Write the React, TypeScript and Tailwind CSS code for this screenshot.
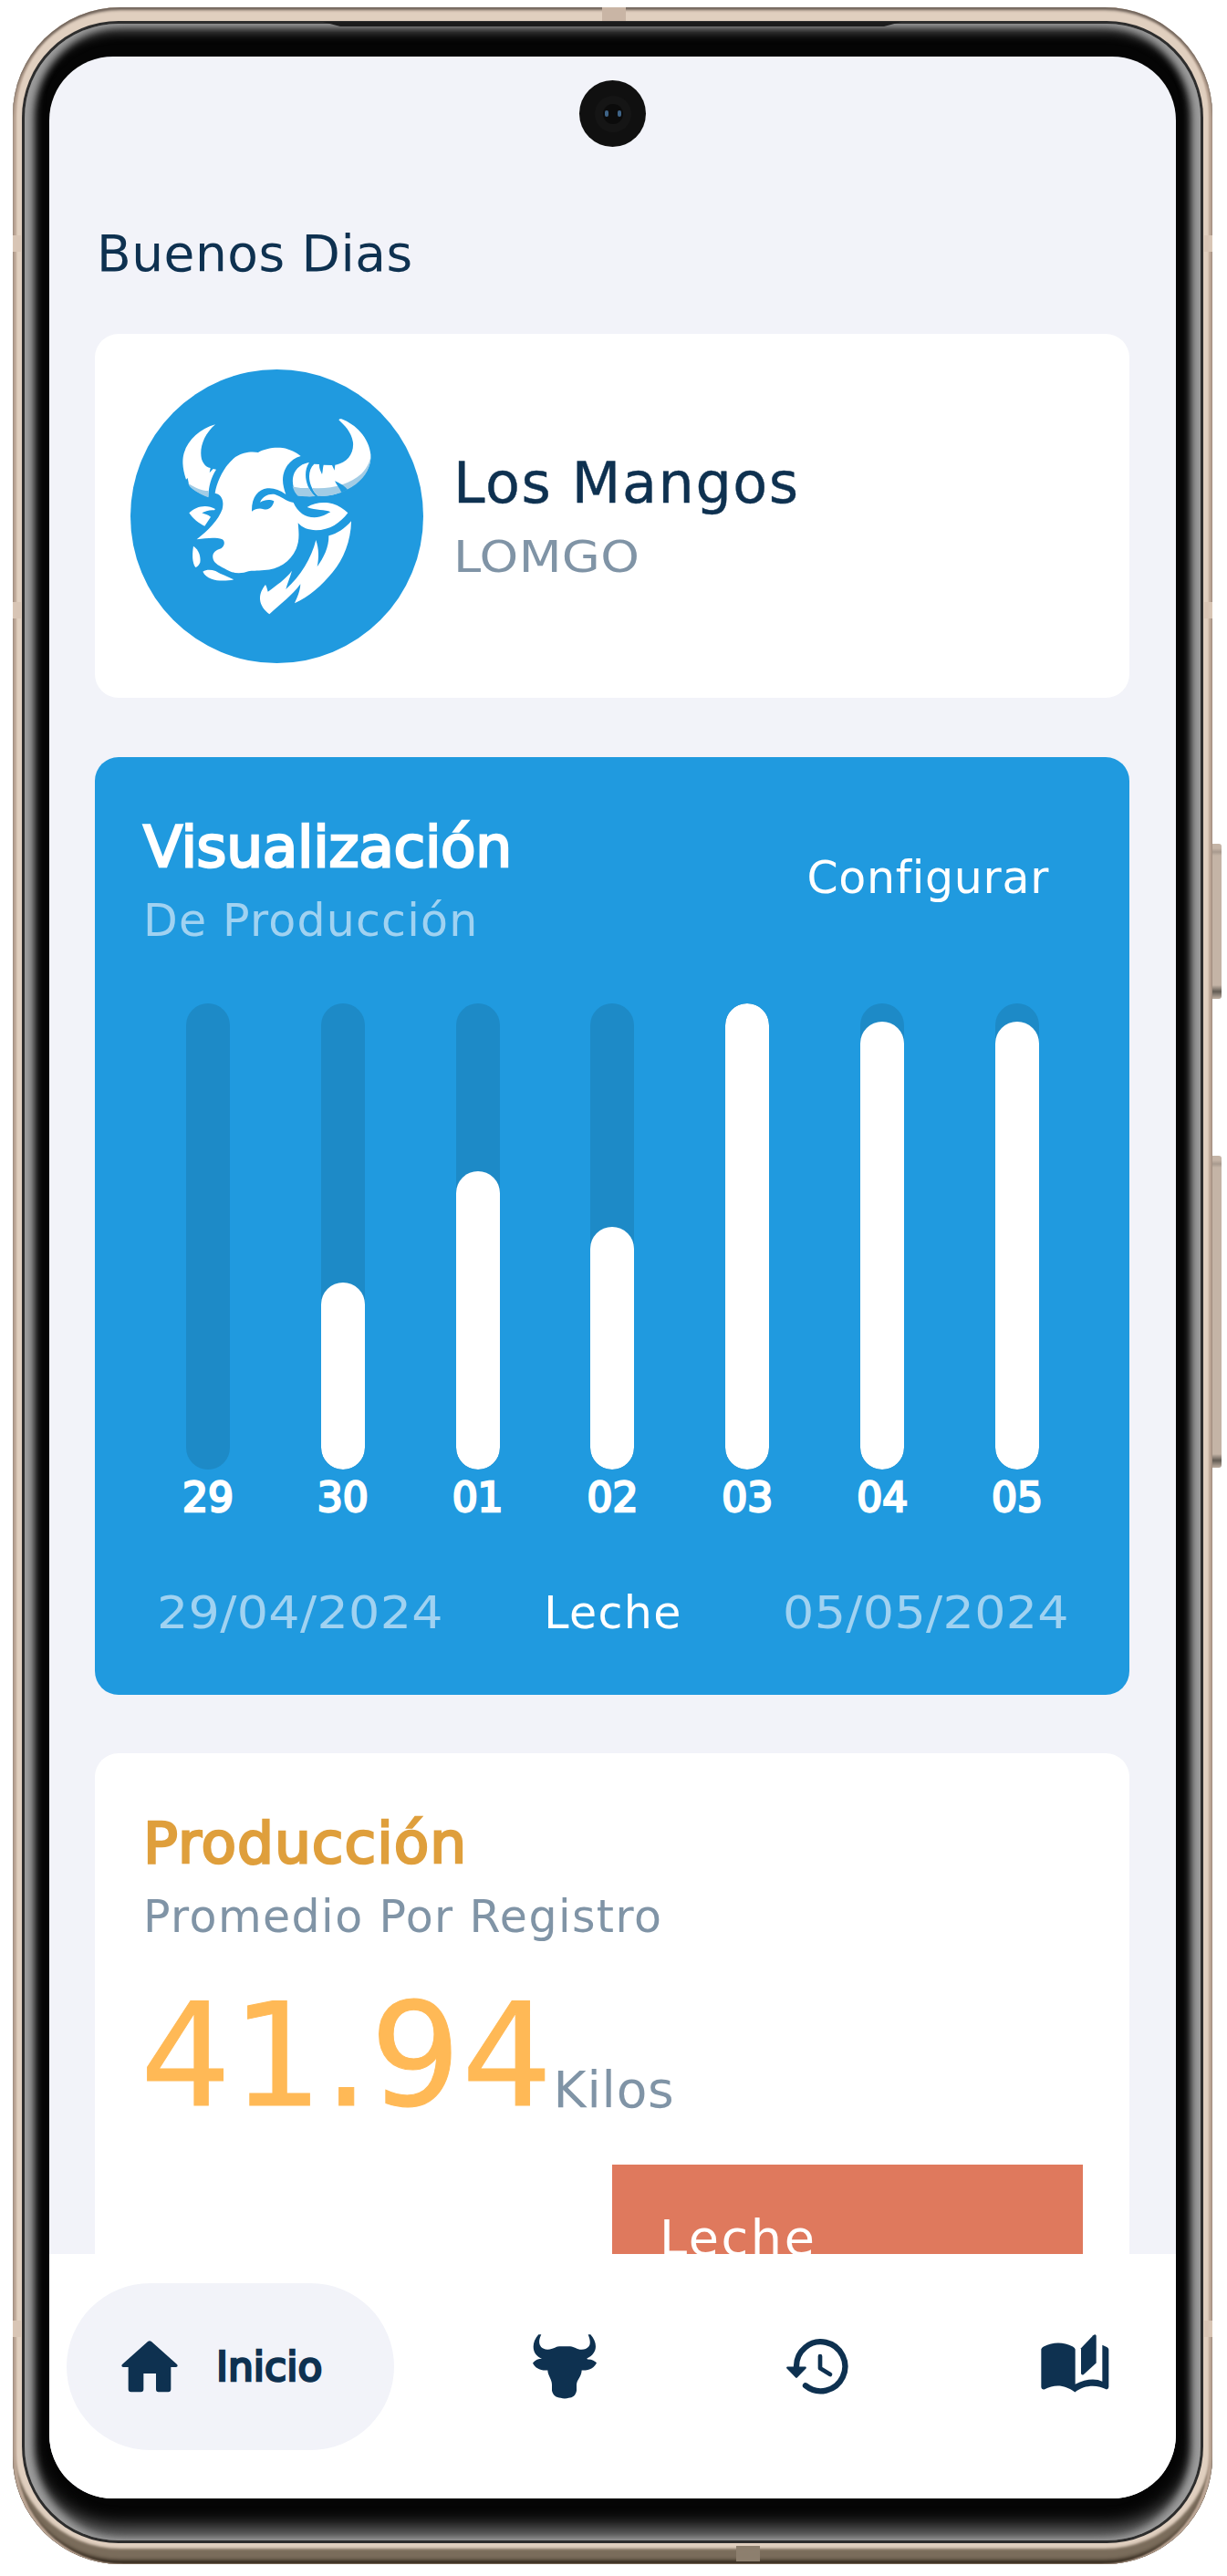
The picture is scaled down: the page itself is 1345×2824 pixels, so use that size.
import React from "react";

const days = [
  { label: "29", fill: 0 },
  { label: "30", fill: 205 },
  { label: "01", fill: 327 },
  { label: "02", fill: 266 },
  { label: "03", fill: 511 },
  { label: "04", fill: 491 },
  { label: "05", fill: 491 },
];

function BullAvatar() {
  return (
    <svg className="h-[322px] w-[321px] shrink-0" viewBox="130 135 963 966">
      <ellipse cx="611.5" cy="618" rx="481.5" ry="483" fill="#209adf" />
      <g fill="#fff">
        <path d="M409 316C370 350 356 395 364 430C370 447 380 458 393 459L390 475L402 462L412 464C395 490 387 520 386 554C360 544 325 525 322 512L318 492L313 497C300 460 300 430 306 410C320 365 360 330 409 316Z" />
        <path d="M408 542C415 500 440 450 475 423C500 406 530 404 550 408C570 396 600 390 630 393C655 397 675 408 690 420C655 430 632 460 631 498C631 515 636 532 641 546C620 530 600 524 580 526C550 530 528 555 529 602C540 594 555 590 568 595C590 600 600 580 602 568C590 562 572 562 556 572C565 552 585 543 605 546C625 552 640 568 666 573C680 605 705 622 735 622C760 621 775 610 788 604C770 594 740 600 711 588C735 572 770 570 795 577C815 583 832 595 845 607C820 640 785 664 740 664C715 663 695 656 681 640C685 680 685 700 675 725C655 770 615 792 570 795C545 798 530 796 518 799C500 806 475 808 455 798C435 787 410 778 403 762C396 745 405 730 428 724C440 716 442 700 432 694C410 686 380 690 348 694C385 665 420 630 432 595C440 560 425 545 408 542Z" />
        <path d="M323 607C345 585 380 577 409 594L406 598C390 596 375 602 365 607C375 612 385 612 394 620L374 650C355 642 335 625 323 607Z" />
        <path d="M337 716C355 728 362 750 359 770C354 780 349 785 344 786C332 770 333 740 337 716Z" />
        <path d="M368 800C380 792 395 793 410 798C430 810 450 816 470 826C440 832 385 835 368 800Z" />
        <path d="M718 441C700 465 700 515 736 552C715 553 695 552 680 550C650 510 660 450 718 441Z" />
        <path d="M734 446L751 447C750 460 755 470 760 480C763 470 762 460 765 449L793 450L801 467L803 449C845 443 865 410 862 375C856 340 835 320 815 301C816 298 820 297 824 298C870 315 915 360 920 415C922 460 895 500 840 530C810 546 780 552 745 550C715 520 708 470 734 446Z" />
        <path d="M856 634C855 700 830 760 795 802C760 845 715 885 670 904C678 885 688 865 689 841C660 880 625 905 587 940C560 920 540 885 574 843C578 850 580 858 582 866C610 845 640 825 661 797C655 820 645 840 641 858C690 815 725 755 740 696C750 725 750 755 744 784C765 755 783 720 782 682C810 675 835 658 856 634Z" />
      </g>
      <g fill="#a2cce5">
        <path d="M320 509C340 523 365 534 386 534L386 556C355 543 323 526 320 509Z" />
        <path d="M663 520C682 526 700 526 717 524C722 535 728 544 738 552C715 554 695 553 680 550C672 543 667 532 663 520Z" />
        <path d="M728 525C790 529 850 515 890 478C905 463 918 440 920 420C922 460 895 505 842 530C810 548 780 552 746 551C738 544 732 535 728 525Z" />
      </g>
      <path d="M802 502C815 508 830 514 844 530L824 540C818 525 808 516 802 502Z" fill="#209adf" />
    </svg>
  );
}

function HomeIcon() {
  return (
    <svg className="h-[57px] w-[62px]" viewBox="399 17 186 171" fill="#0e3150">
      <path d="M486 20Q492 15 498 20L582 95Q587 102 579 104H562V177Q562 186 553 186H521Q513 186 513 177V125H472V177Q472 186 463 186H431Q422 186 422 177V104H405Q397 102 402 95Z" />
    </svg>
  );
}

function BullIcon() {
  return (
    <svg className="h-[71px] w-[70px]" viewBox="131 120 210 212" fill="#0e3150">
      <path d="M150 120H159C148 140 148 168 180 170C200 168 205 160 218 159H254C268 160 275 169 292 170C326 166 322 142 313 120H321C347 150 343 183 309 199L311 202C325 201 335 208 341 213C334 228 320 239 292 238C291 260 276 268 275 285V305C272 322 262 328 249 329C242 332 230 332 223 329C208 328 197 320 194 305V285C194 268 181 256 180 238C155 240 138 230 131 214C140 203 150 200 161 200C128 188 124 148 150 120Z" />
    </svg>
  );
}

function HistoryIcon() {
  return (
    <svg className="h-[61px] w-[68px]" viewBox="966 134 204 183" fill="none" stroke="#0e3150" strokeLinecap="round" strokeLinejoin="round">
      <path d="M999 226A80 81 0 1 1 1029 288" strokeWidth="19" />
      <path d="M1077 191V231L1110 251" strokeWidth="14" />
      <path d="M970 229H1028L999 259Z" fill="#0e3150" strokeWidth="7" />
    </svg>
  );
}

function BookIcon() {
  return (
    <svg className="h-[64px] w-[75px]" viewBox="739 296 225 191" fill="#0e3150">
      <path d="M740 344Q742 339 748 336Q796 312 844 336Q851 340 852 345V460Q882 444 910 444Q928 444 941 451V331L957 338Q962 341 962 346V469Q962 476 955 477C925 462 885 460 851 486C815 460 785 460 750 477Q741 478 740 469Z" />
      <path d="M871 341L911 299Q920 293 921 301V390L879 428Q872 431 871 424Z" />
    </svg>
  );
}

function ProfileCard() {
  return (
    <section className="flex h-[399px] items-center gap-[33px] rounded-[26px] bg-white pl-[39px]">
      <BullAvatar />
      <div className="flex flex-col items-start">
        <h2 className="pt-[2px] text-[62px] leading-[62px] tracking-[1.6px] text-[#0e3150] [-webkit-text-stroke:0.4px_currentColor]">Los Mangos</h2>
        <p className="mt-[25px] origin-left scale-x-[1.13] text-[48px] leading-[48px] tracking-[0.3px] text-[#8094a6]">LOMGO</p>
      </div>
    </section>
  );
}

function ChartCard() {
  return (
    <section className="mt-[65px] h-[1028px] rounded-[26px] bg-[#209adf] pt-[67px] text-white">
      <div className="flex justify-between pl-[53px] pr-[88px]">
        <div>
          <h2 className="text-[63px] leading-[63px] tracking-[-0.3px] [-webkit-text-stroke:2.6px_currentColor]">Visualización</h2>
          <p className="mt-[25px] text-[49px] leading-[49px] tracking-[1.2px] text-[#a0d2f1]">De Producción</p>
        </div>
        <button className="mt-[41px] self-start text-[49px] leading-[49px] tracking-[0.7px]">Configurar</button>
      </div>
      <div className="mt-[66px] grid grid-cols-7 pl-[50px] pr-[49px]">
        {days.map((d) => (
          <div key={d.label} className="flex flex-col items-center">
            <div className="flex h-[511px] w-12 flex-col justify-end overflow-hidden rounded-full bg-[#1d8ac7]">
              <div className="rounded-full bg-white" style={{ height: d.fill }} />
            </div>
            <span className="mt-[8px] text-[44px] leading-[46px] [-webkit-text-stroke:2.6px_currentColor]">{d.label}</span>
          </div>
        ))}
      </div>
      <div className="mt-[79px] flex justify-between pl-[68px] pr-[66px] text-[49px] leading-[49px]">
        <span className="w-[310px] origin-left scale-x-[1.1] tracking-[0.3px] text-[#a0d2f1]">29/04/2024</span>
        <span className="tracking-[1.4px]">Leche</span>
        <span className="w-[310px] origin-right scale-x-[1.1] text-right tracking-[0.3px] text-[#a0d2f1]">05/05/2024</span>
      </div>
    </section>
  );
}

function ProductionCard() {
  return (
    <section className="mt-[64px] h-[700px] rounded-[26px] bg-white pl-[53px] pt-[67px]">
      <h2 className="text-[63px] leading-[63px] tracking-[1px] text-[#df9f3c] [-webkit-text-stroke:2.6px_currentColor]">Producción</h2>
      <p className="mt-[25px] text-[49px] leading-[49px] tracking-[1.4px] text-[#8094a6]">Promedio Por Registro</p>
      <div className="-ml-[3px] mt-[50px] flex items-end">
        <span className="text-[156px] leading-[156px] tracking-[1.2px] text-[#ffb956] [-webkit-text-stroke:1px_currentColor]">41.94</span>
        <span className="mb-[13px] text-[55px] leading-[55px] tracking-[0.8px] text-[#8094a6]">Kilos</span>
      </div>
      <div className="ml-[514px] mt-[41px] h-[300px] w-[516px] bg-[#df795d] pl-[52px] pt-[54px]">
        <span className="block text-[54px] leading-[54px] tracking-[2.6px] text-white">Leche</span>
      </div>
    </section>
  );
}

function NavBar() {
  return (
    <nav className="flex h-[268px] shrink-0 bg-white pl-[19px] pt-[32px]">
      <div className="flex h-[183px] w-[359px] items-center rounded-full bg-[#f2f3f9] pl-[60px]">
        <HomeIcon />
        <span className="ml-[42px] text-[44px] leading-[46px] text-[#0e3150] [-webkit-text-stroke:2.6px_currentColor]">Inicio</span>
      </div>
      <div className="flex h-[183px] items-center">
        <span className="ml-[152px]"><BullIcon /></span>
        <span className="ml-[208px]"><HistoryIcon /></span>
        <span className="-mt-[8px] ml-[211px]"><BookIcon /></span>
      </div>
    </nav>
  );
}

export default function App() {
  return (
    <div className="h-[2824px] w-[1345px] overflow-hidden bg-white pl-[14px] pt-[8px] font-['DejaVu_Sans',sans-serif]">
      <div className="relative h-[2803px] w-[1315px] rounded-[118px] bg-[#e0cfbf] px-[10px] pb-[23px] pt-[15px] shadow-[inset_0_3px_3px_#6e6259,inset_4px_0_2px_#c0aa99,inset_-4px_0_2px_#c0aa99,inset_0_-4px_4px_#2a2015,inset_0_-17px_3px_#7a6c5b]">
        <div className="h-full rounded-[106px] bg-[#2d2d2d] p-[3px]">
          <div className="h-full rounded-[103px] bg-[#050505] px-[27px] pb-[46px] pt-[36px] shadow-[inset_10px_0_9px_#9c9c9c,inset_-10px_0_9px_#9c9c9c,inset_0_7px_13px_#747474,inset_0_-14px_20px_#747474]">
            <main className="flex h-full flex-col overflow-hidden rounded-[70px] bg-[#f2f3f9]">
              <div className="min-h-0 flex-1 overflow-hidden pl-[50px] pr-[51px] pt-[188px]">
                <h1 className="mb-[60px] pl-[2px] text-[55px] leading-[56px] tracking-[0.5px] text-[#0e3150]">Buenos Dias</h1>
                <ProfileCard />
                <ChartCard />
                <ProductionCard />
              </div>
              <NavBar />
            </main>
          </div>
        </div>
        <div className="absolute left-[340px] top-[16px] h-[5px] w-[634px] bg-[#1c1c1c] [clip-path:polygon(0_0,100%_0,97%_100%,3%_100%)]" />
        <div className="absolute left-[646px] top-0 h-[15px] w-[26px] bg-[#c9b5a5]" />
        <div className="absolute bottom-[3px] left-[793px] h-[17px] w-[26px] bg-[#8d7f6e]" />
        {["top-[250px]", "top-[652px]", "top-[2536px]"].map((pos) => (
          <React.Fragment key={pos}>
            <div className={"absolute left-0 h-[18px] w-[9px] bg-[#d8c5b5] " + pos} />
            <div className={"absolute right-0 h-[18px] w-[9px] bg-[#d8c5b5] " + pos} />
          </React.Fragment>
        ))}
        <div className="absolute -right-[10px] top-[917px] h-[170px] w-[10px] rounded-r-[3px] bg-[linear-gradient(#c4b4a6_0,#c4b4a6_5px,#a89a8e_9px,#c4b4a6_13px,#c4b4a6_155px,#625b53_162px,#b5a699_169px)]" />
        <div className="absolute -right-[10px] top-[1259px] h-[342px] w-[10px] rounded-r-[3px] bg-[linear-gradient(#c4b4a6_0,#c4b4a6_5px,#a89a8e_9px,#c4b4a6_13px,#c4b4a6_327px,#625b53_334px,#b5a699_341px)]" />
        <div className="absolute left-[621px] top-[80px] flex h-[73px] w-[73px] items-center justify-center rounded-full bg-[#101010]">
          <div className="flex h-10 w-10 items-center justify-center rounded-full bg-[#151515]">
            <div className="flex h-[22px] w-[22px] items-center justify-between rounded-full bg-[#0b0b0b] px-[2px]">
              <div className="h-[7px] w-[4px] rounded-full bg-[#3f6487]" />
              <div className="h-[7px] w-[4px] rounded-full bg-[#3f6487]" />
            </div>
          </div>
        </div>
      </div>
    </div>
  );
}
